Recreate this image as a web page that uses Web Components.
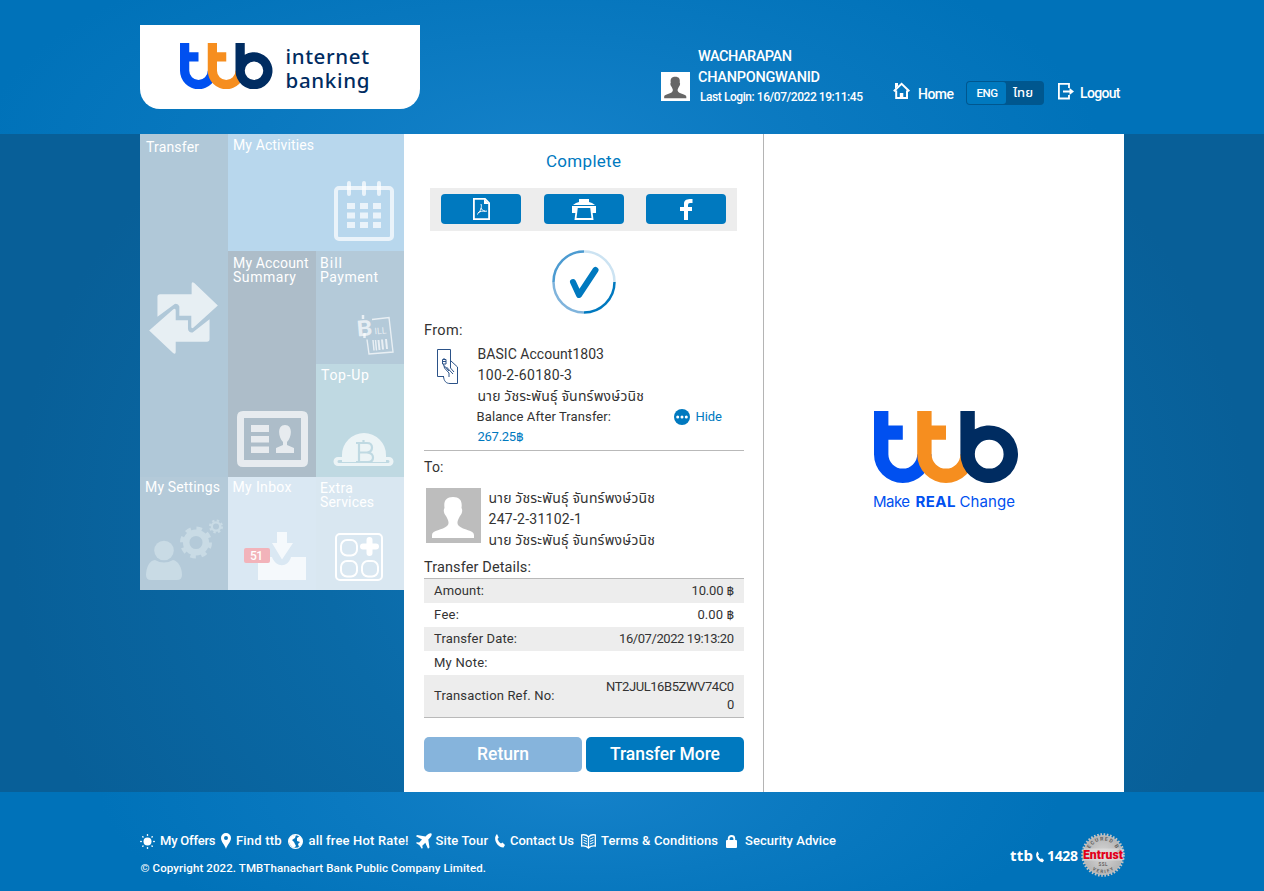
<!DOCTYPE html>
<html lang="en">
<head>
<meta charset="utf-8">
<title>ttb internet banking</title>
<style>
html,body{margin:0;height:100%}
body{font-family:Roboto,"Noto Sans Thai","Noto Sans",sans-serif;color:#333;overflow:hidden}
</style>
</head>
<body>
<bank-app></bank-app>
<script>
const make = (name, html, after) => customElements.define(name, class extends HTMLElement {
  constructor() {
    super();
    this.attachShadow({mode: 'open'}).innerHTML = html;
  }
  connectedCallback() { if (after) after(this); }
});

// Logo mark, drawn on a 10 x 5 unit grid
make('ttb-mark', `<style>:host{display:block}svg{display:block;width:100%;height:auto}</style>
<svg viewBox="0 0 10 5"><path fill="#0050f0" d="M0 0H1V1H2V2H1V3A1 1 0 0 0 3 3H4A2 2 0 0 1 0 3Z"/>
<path fill="#f68e1f" d="M3 0H4V1H5V2H4V3A1 1 0 0 0 6 3H7A2 2 0 0 1 3 3Z"/>
<path fill="#002c61" fill-rule="evenodd" d="M6 0H7V1.27A2 2 0 1 1 6 3ZM8 2A1 1 0 1 0 8 4A1 1 0 1 0 8 2Z"/></svg>`);

make('user-silhouette', `<style>:host{display:block}svg{display:block;width:100%;height:100%}</style>
<svg viewBox="0 0 55 55"><path fill="currentColor" d="M6 50V47C6 42 17 42 21 38C24 35 22 32 20 28C18 26 17 22 18.500 20C17.500 13 20 9 27 9S36.500 13 35.500 20C37 22 36 26 34 28C32 32 30 35 33 38C37 42 48 42 48 47V50Z"/></svg>`);

make('site-header', `<style>
:host{display:flex;height:134px;box-sizing:border-box;padding:25px 140px 0;color:#fff;background:radial-gradient(ellipse 560px 230px at 540px 150px,#1481c9 0,#0a79c0 50%,#0072b9 100%)}
.logo{width:280px;height:84px;background:#fff;border-radius:0 0 20px 20px;display:flex;box-sizing:border-box;padding:18px 0 0 40px;color:#002c61}
ttb-mark{width:92.500px}.words{margin:2px 0 0 13px}
.user{margin-left:241px;padding-top:21px;display:flex;width:232px}
.pic{margin-top:26px;width:29px;height:29px;background:#fff;color:#666;overflow:hidden;flex:none}
.names{margin-left:8px}
.nav{display:flex;align-items:flex-start;padding-top:56px}
.nav svg{display:block}
.toggle{display:flex;box-sizing:border-box;width:78px;height:24px;padding:1px;background:#00578f;border-radius:4px;margin-left:12px}
.on{width:39px;background:#0079bf;border-radius:3px}
</style>
<div class="logo"><ttb-mark></ttb-mark><div class="words"><ui-text w="83.500" size="20.500" lh="23" face="Noto Sans" weight="500">internet</ui-text><ui-text w="84" size="20.500" lh="24" face="Noto Sans" weight="500">banking</ui-text></div></div>
<div class="user"><div class="pic"><user-silhouette></user-silhouette></div>
<div class="names"><ui-text w="94" size="14.500" lh="21" weight="500">WACHARAPAN</ui-text><ui-text w="122" size="14.500" lh="21" weight="500">CHANPONGWANID</ui-text><ui-text w="163" size="12" lh="19" weight="500" style="margin-left:2px">Last Login: 16/07/2022 19:11:45</ui-text></div></div>
<div class="nav">
<svg width="17" height="17" viewBox="0 0 17 17" style="margin-top:1px"><path fill="none" stroke="#fff" stroke-width="2" d="M3.200 8.500V16H14V8.500M.8 9.200L8.600 1.800L16.300 9.200"/><path fill="#fff" d="M2 1H5V4L2 7ZM6.800 11H10.300V16H6.800Z"/></svg>
<ui-text w="36" size="14" lh="20" weight="500" style="margin:3px 0 0 8px">Home</ui-text>
<div class="toggle"><div class="on"><ui-text w="21.500" size="11.500" lh="22" weight="500" style="margin-left:9.500px">ENG</ui-text></div><ui-text w="20" size="13" lh="21" weight="500" style="margin-left:7px">ไทย</ui-text></div>
<svg width="16" height="17" viewBox="0 0 16 17" style="margin:2px 0 0 14px"><path fill="none" stroke="#fff" stroke-width="1.800" d="M11 5V.9H.9V15.500H11V12M5 8.500H13"/><path fill="#fff" d="M11.500 5L16 8.500L11.500 12Z"/></svg>
<ui-text w="40.500" size="14" lh="20" weight="500" style="margin:2px 0 0 6px">Logout</ui-text>
</div>`);

make('menu-tile', `<style>:host{display:flex;flex-direction:column;justify-content:space-between;box-sizing:border-box;color:#fff;overflow:hidden}::slotted(svg){display:block;align-self:flex-end;flex:none}</style>
<div><slot name="label"></slot></div><slot></slot>`);

make('side-menu', `<style>
:host{display:grid;grid-template:117px 113px 113px 113px / 88px 88px 88px;width:264px;height:456px;flex:none}
</style>
<menu-tile style="grid-area:1/1/4/2;background:#b0c8d8;padding:3px 10px 123px 6px"><ui-text slot="label" w="53" size="14" lh="20">Transfer</ui-text>
<svg width="69" height="72" viewBox="33 450 207 217" fill="#fff" fill-opacity=".7"><path d="M58 555V495q0-8 8-8H161V456q0-8 8-3L240 521L166 588q-6 4-6-3V552H124V524q-3-10-14-8Z"/><path d="M33 596L106 532q7-4 7 4V565H150V592q2 12 14 10L215 562V622q0 8-8 8H113V660q0 10-8 4Z"/></svg></menu-tile>
<menu-tile style="grid-area:1/2/2/4;background:#b8d7ed;padding:1px 10px 10px 5px"><ui-text slot="label" w="81" size="14" lh="20">My Activities</ui-text>
<svg width="60" height="60" viewBox="0 0 60 60" fill="none" stroke="#fff" stroke-opacity=".7"><rect x="2" y="7" width="56" height="51" rx="3" stroke-width="4"/><path stroke-width="4" stroke-linecap="round" d="M15 2V13M30 2V13M45 2V13"/><path stroke-width="6" stroke-dasharray="8 5" d="M13 25H47M13 34.500H47M13 44H47"/></svg></menu-tile>
<menu-tile style="grid-area:2/2/4/3;background:#adbdc9;padding:5px 8px 10px 5px"><div slot="label"><ui-text w="75.500" size="14" lh="14">My Account</ui-text><ui-text w="63" size="14" lh="14">Summary</ui-text></div>
<svg width="71" height="56" viewBox="0 0 71 56" fill="#fff" fill-opacity=".7"><path fill-rule="evenodd" d="M6 0H65Q71 0 71 6V50Q71 56 65 56H6Q0 56 0 50V6Q0 0 6 0ZM7 7V49H64V7ZM14 14H32V21H14ZM14 25H32V31.500H14ZM14 35.500H32V42H14ZM39 42V37L46 34V31C41 26 40 14 48 14S55 26 50 31V34L57 37V42Z"/></svg></menu-tile>
<menu-tile style="grid-area:2/3/3/4;background:#b4cad9;padding:5px 10px 9.500px 4px"><div slot="label"><ui-text w="22" size="14" lh="14">Bill</ui-text><ui-text w="58" size="14" lh="14">Payment</ui-text></div>
<svg width="37" height="40" viewBox="0 0 37 40" overflow="visible"><g fill="none" stroke="#fff" stroke-opacity=".7"><path stroke-width="1.400" d="M15 4.500L32 2.500L36 37L12 39L10 24.500"/><path stroke-width="1.500" d="M16 25l1 10.500M18.500 25l1 10.500"/><path stroke-width="2" d="M21.500 25l1 10M25 24.500l1 10M29 24l1 10"/><path stroke-width="2.500" d="M6 0v4M7.500 18v5"/></g><g fill="#fff" fill-opacity=".7" font-family="Roboto" transform="rotate(-5 10 10)"><text x="-.5" y="20.500" font-size="22" font-weight="700" textLength="15.500" lengthAdjust="spacingAndGlyphs">B</text><text x="17" y="20" font-size="9" textLength="12">ILL</text></g></svg></menu-tile>
<menu-tile style="grid-area:3/3/4/4;background:#bfd9e2;padding:1px 10px 10px 5px"><ui-text slot="label" w="48" size="14" lh="20">Top-Up</ui-text>
<svg width="61" height="35" viewBox="0 0 61 35"><path fill="#fff" fill-opacity=".7" d="M9 30V23A22 22 0 0 1 53 23V30ZM9 25H5A4.500 4.500 0 0 0 5 34H56A4.500 4.500 0 0 0 56 25H53V28H55A1.500 1.500 0 0 1 55 31H6A1.500 1.500 0 0 1 6 28H9Z"/><g stroke="#bfd9e2" fill="none" stroke-width="2.200"><path d="M23 11H34Q39 11 39 15.500T34 20.500H25M26 11V30M34 20.500Q40 21 40 25.500T35 30H23"/><path d="M30.500 8V11"/></g></svg></menu-tile>
<menu-tile style="grid-area:4/1;background:#b4cad9;padding:0 5px 10px 5px"><ui-text slot="label" w="75" size="14" lh="20">My Settings</ui-text>
<svg width="77" height="61" viewBox="0 0 77 61" fill="#c9dbe5"><circle cx="18" cy="31.500" r="9.800"/><path d="M0 55C1 44 6 41 9 41Q18 46 27 41C32 42 36 48 36 56Q36 61 31 61H5Q0 61 0 56Z"/><g fill="none" stroke="#c9dbe5"><circle cx="50" cy="23.500" r="9.800" stroke-width="6.500"/><circle cx="50" cy="23.500" r="14" stroke-width="4" stroke-dasharray="5.500 5.500"/><circle cx="70" cy="7.500" r="4.200" stroke-width="2.300"/><circle cx="70" cy="7.500" r="6" stroke-width="2" stroke-dasharray="2.360 2.360"/></g></svg></menu-tile>
<menu-tile style="grid-area:4/2;background:#dae8f3;padding:0 10px 10px 4.500px"><ui-text slot="label" w="59" size="14" lh="20">My Inbox</ui-text>
<svg width="62" height="48" viewBox="0 0 62 48"><path fill="#fff" fill-opacity=".72" d="M14 25H28C32 36 44 36 47 25H62V48H14Z"/><path fill="#fff" fill-opacity=".72" d="M33 0H43V11H49L38 27.500L28 11H33Z"/><rect y="16" width="26" height="15" rx="2" fill="#f2b3ba"/><text x="6" y="27.500" font-family="Roboto" font-size="12" textLength="13" fill="#fff" font-weight="500">51</text></svg></menu-tile>
<menu-tile style="grid-area:4/3;background:#d9e7f1;padding:4px 21px 9px 4px"><div slot="label"><ui-text w="33" size="14" lh="14">Extra</ui-text><ui-text w="54" size="14" lh="14">Services</ui-text></div>
<svg width="48" height="48" viewBox="0 0 48 48" fill="none" stroke="#fff"><rect x="1" y="1" width="46" height="46" rx="4" stroke-width="2"/><g stroke-width="2"><rect x="6" y="7" width="16" height="15.500" rx="6"/><rect x="6" y="28" width="16" height="15.500" rx="6"/><rect x="27" y="28" width="16" height="15.500" rx="6"/></g><path stroke-width="6" stroke-linecap="round" d="M34.500 7V20M28 13.500H41"/></svg></menu-tile>`);

make('action-button', `<style>:host{display:flex;align-items:center;justify-content:center;width:80px;height:30px;border-radius:4px;background:#0079bf;color:#fff}</style><slot></slot>`);

make('detail-row', `<style>:host{display:flex;align-items:center;justify-content:space-between;height:24px;padding:0 10px}:host([alt]){background:#ededed}:host([tall]){height:42px}</style><slot></slot>`);

make('transfer-receipt', `<style>
:host{display:block;box-sizing:border-box;width:360px;height:658px;flex:none;background:#fff;border-right:1px solid #b4b4b4;padding:17px 19px 0 20px;color:#333}
.c{margin-left:122px;color:#0079bf}
.bar{display:flex;background:#ededed;height:43px;width:307px;box-sizing:border-box;margin:17px 0 0 6px;padding:6px 11px;justify-content:space-between}
.check{display:block;margin:19px 0 0 128px}
.row{display:flex}.blue{color:#0079bf}
.from{height:106px;border-bottom:1px solid #b9b9b9;margin-top:3px}
.from>svg{margin:4px 0 0 12px;flex:none}.acct{margin-left:19.500px}
.bal{width:197px;flex:none}
.pic{width:55px;height:55px;background:#bdbdbd;color:#fff;margin:11px 0 0 2px;flex:none}
.table{border:solid #b9b9b9;border-width:1px 0}
.buttons{display:flex;gap:4px;margin-top:19px}.buttons action-button{width:158px;height:35px;border-radius:5px}
</style>
<ui-text class="c" w="75" size="17" lh="20">Complete</ui-text>
<div class="bar">
<action-button><svg width="17" height="22" viewBox="0 0 17 22"><path fill="none" stroke="#fff" stroke-width="1.800" d="M.9.900H12L16.100 5V21.100H.9Z"/><path fill="#fff" d="M11 1V6H16Z"/><path fill="none" stroke="#fff" d="M8 6C9 9 8 13 4 16.500M8 10C9 12 11 14 14 13M5 15C7 13 10 13 12 13"/></svg></action-button>
<action-button><svg width="24" height="22" viewBox="0 0 24 22"><path fill="#fff" d="M7 1H17V4L20 5L23 7H1L4 5L7 4ZM0 8H24V15H20L19 10H5L4 15H0Z"/><path fill="none" stroke="#fff" stroke-width="1.800" d="M5 9L3.500 21H20.500L19 9"/></svg></action-button>
<action-button><svg width="13" height="21" viewBox="0 0 13 21"><path fill="#fff" d="M4 21V12H0V8H4V5C4 1 7-.3 12.500 0V4H10Q8 4 8 6V8H12V12H8V21Z"/></svg></action-button>
</div>
<svg class="check" width="64" height="64" viewBox="0 0 64 64" fill="none" stroke-width="2.500"><path stroke="#cce3f2" d="M32 1.500A30.500 30.500 0 0 1 62.500 32"/><path stroke="#0079bf" d="M62.500 32A30.500 30.500 0 0 1 32 62.500"/><path stroke="#80b4dc" d="M32 62.500A30.500 30.500 0 0 1 1.500 32"/><path stroke="#4c9bd1" d="M1.500 32A30.500 30.500 0 0 1 32 1.500"/><path stroke="#0079bf" stroke-width="6" stroke-linecap="round" stroke-linejoin="round" d="M21 32L27 45L43.500 20"/></svg>
<ui-text w="38.500" size="14.500" lh="20" style="margin-top:7px">From:</ui-text>
<div class="row from"><svg width="22" height="36" viewBox="0 0 22 36" fill="none" stroke="#2b5288"><path d="M14.500 13V1.500H1.500V28.500H8M7.500 28.500C8 33 10 35.500 14 35.500H21.500V19L14.500 12.500M14.500 13V20L18 24M10.500 19L17 26M8 17.500L13 23M7.500 16L8.500 20L13 25V29"/><path d="M6.500 11.500H10V16H6.500ZM6.500 13.500H10M8 10V11.500"/></svg>
<div class="acct"><ui-text w="126.500" size="14" lh="21">BASIC Account1803</ui-text><ui-text w="94.500" size="14" lh="21">100-2-60180-3</ui-text><ui-text w="166.500" size="14" lh="21">นาย วัชระพันธุ์ จันทร์พงษ์วนิช</ui-text>
<div class="row"><ui-text class="bal" w="134.500" size="13" lh="20" style="margin-left:-1px">Balance After Transfer:</ui-text><svg width="16" height="16" viewBox="0 0 16 16" style="margin-top:2px;flex:none"><circle cx="8" cy="8" r="8" fill="#0079bf"/><path stroke="#fff" stroke-width="3" stroke-linecap="round" d="M3.700 8h0M8 8h0M12.300 8h0"/></svg><ui-text class="blue" w="26.500" size="13" lh="20" style="margin-left:6px">Hide</ui-text></div>
<ui-text class="blue" w="46" size="13" lh="20">267.25฿</ui-text></div></div>
<ui-text w="19.500" size="14" lh="20" style="margin-top:6px">To:</ui-text>
<div class="row"><div class="pic"><user-silhouette></user-silhouette></div><div style="margin:11px 0 0 7.500px"><ui-text w="166.500" size="14" lh="21">นาย วัชระพันธุ์ จันทร์พงษ์วนิช</ui-text><ui-text w="93.500" size="14" lh="21">247-2-31102-1</ui-text><ui-text w="166.500" size="14" lh="21">นาย วัชระพันธุ์ จันทร์พงษ์วนิช</ui-text></div></div>
<ui-text w="107" size="14.500" lh="20" style="margin:7px 0 0">Transfer Details:</ui-text>
<div class="table">
<detail-row alt><ui-text w="50" size="13" lh="18">Amount:</ui-text><ui-text w="42.500" size="13" lh="18">10.00 ฿</ui-text></detail-row>
<detail-row><ui-text w="25" size="13" lh="18">Fee:</ui-text><ui-text w="36.500" size="13" lh="18">0.00 ฿</ui-text></detail-row>
<detail-row alt><ui-text w="83" size="13" lh="18">Transfer Date:</ui-text><ui-text w="115" size="13" lh="18">16/07/2022 19:13:20</ui-text></detail-row>
<detail-row><ui-text w="53.500" size="13" lh="18">My Note:</ui-text></detail-row>
<detail-row alt tall><ui-text w="120.500" size="13" lh="18">Transaction Ref. No:</ui-text><div><ui-text w="128" size="13" lh="18">NT2JUL16B5ZWV74C0</ui-text><ui-text w="7" size="13" lh="18" style="margin-left:auto">0</ui-text></div></detail-row>
</div>
<div class="buttons"><action-button style="background:#86b4dc"><ui-text w="52" size="17.500" lh="35" weight="500">Return</ui-text></action-button><action-button><ui-text w="110" size="17.500" lh="35" weight="500">Transfer More</ui-text></action-button></div>`);

make('brand-panel', `<style>:host{display:block;box-sizing:border-box;width:360px;height:658px;background:#fff;padding:277px 0 0 110px;color:#0050f0;flex:none}ttb-mark{width:144px}.s{display:flex;margin-top:9px}</style>
<ttb-mark></ttb-mark><div class="s"><ui-text w="37" size="15" lh="20" face="Inter" style="margin-left:-1px">Make</ui-text><ui-text w="40" size="15" lh="20" face="Inter" weight="700" style="margin-left:5.500px">REAL</ui-text><ui-text w="55.500" size="15" lh="20" face="Inter" style="margin-left:4px">Change</ui-text></div>`);

make('foot-link', `<style>:host{display:flex;align-items:center;height:20px}::slotted(svg){display:block;flex:none}</style><slot></slot>`);

make('site-footer', `<style>
:host{display:flex;height:99px;box-sizing:border-box;padding:39px 139px 0 140px;color:#fff;background:radial-gradient(ellipse 480px 170px at 580px 0,#1481c9 0,#0a79c0 50%,#0072b9 100%)}
.left{width:870px;flex:none}.links{display:flex}.links ui-text{flex:none}
.right{display:flex;padding-top:2px}
</style>
<div class="left"><div class="links">
<foot-link><svg width="15" height="15" viewBox="0 0 15 15"><circle cx="7.500" cy="7.500" r="4" fill="#fff"/><path stroke="#fff" stroke-width="1.500" stroke-linecap="round" d="M7.500.8v.4M7.500 13.800v.4M.8 7.500h.4M13.800 7.500h.4M2.800 2.800l.2.200M12 12l.2.200M2.800 12.200l.2-.2M12 3l.2-.2"/></svg><ui-text w="55.500" size="13" lh="20" weight="500" style="margin-left:5px">My Offers</ui-text></foot-link>
<foot-link style="margin-left:5px"><svg width="10" height="16" viewBox="0 0 10 16"><path fill="#fff" fill-rule="evenodd" d="M5 0A5 5 0 0 0 0 5C0 9 4 12 5 16C6 12 10 9 10 5A5 5 0 0 0 5 0ZM5 3A2 2 0 1 1 5 7A2 2 0 1 1 5 3Z"/></svg><ui-text w="45.500" size="13" lh="20" weight="500" style="margin-left:5.500px">Find ttb</ui-text></foot-link>
<foot-link style="margin-left:6.500px"><svg width="15" height="15" viewBox="0 0 15 15"><circle cx="7.500" cy="7.500" r="6.900" fill="none" stroke="#fff" stroke-width="1.200"/><path fill="#fff" d="M1 5Q3 1 8 1L7 4L4 6L6 8L8 12L6 14Q2 12 1 8ZM9 4L12 2Q15 5 14 10L11 13L10 10L12 8L9 7Z"/></svg><ui-text w="100" size="13" lh="20" weight="500" style="margin-left:5.500px">all free Hot Rate!</ui-text></foot-link>
<foot-link style="margin-left:7.500px"><svg width="16" height="16" viewBox="0 0 16 16"><path fill="#fff" d="M15.500.5Q13.500-.3 11 2L9.500 3.500L1 2L0 3.200L6 6.500L3.200 9.500L.8 9.200L0 10L3.500 12.300L5.800 15.800L6.700 15L6.300 12.700L9.300 9.800L12 15.800L13.500 14.500L12.300 6.500L14 4.800Q16.300 2.500 15.500.5Z"/></svg><ui-text w="52.500" size="13" lh="20" weight="500" style="margin-left:3.500px">Site Tour</ui-text></foot-link>
<foot-link style="margin-left:7px"><svg width="10" height="14" viewBox="0 0 10 14"><path fill="#fff" d="M2 0L3.700 3.500L2.500 5Q3.500 8 6 9.500L7.500 8.500L10 11L8.500 13.500C3 14-3 5 2 0Z"/></svg><ui-text w="64" size="13" lh="20" weight="500" style="margin-left:5px">Contact Us</ui-text></foot-link>
<foot-link style="margin-left:7px"><svg width="15" height="15" viewBox="0 0 15 15" fill="none" stroke="#fff"><path stroke-width="1.300" d="M.7 1Q5 0 7.500 3Q10 0 14.300 1V12Q10 11.500 7.500 14Q5 11.500.7 12ZM7.500 3V14"/><path d="M2.500 3.500L6 5M2.500 6L6 7.500M2.500 8.500L6 10M12.500 3.500L9 5M12.500 6L9 7.500M12.500 8.500L9 10"/></svg><ui-text w="117" size="13" lh="20" weight="500" style="margin-left:5px">Terms &amp; Conditions</ui-text></foot-link>
<foot-link style="margin-left:7.500px"><svg width="11" height="13" viewBox="0 0 11 13"><rect y="5" width="11" height="8" rx="1" fill="#fff"/><path fill="none" stroke="#fff" stroke-width="1.800" d="M2.700 6V3.500Q2.700 1 5.500 1T8.300 3.500V6"/></svg><ui-text w="91" size="13" lh="20" weight="500" style="margin-left:8.500px">Security Advice</ui-text></foot-link>
</div><ui-text w="345.500" size="11.500" lh="20" weight="500" style="margin:7px 0 0 .5px">© Copyright 2022. TMBThanachart Bank Public Company Limited.</ui-text></div>
<div class="right"><ui-text w="23" size="15" lh="20" face="Noto Sans" weight="700" style="margin-top:12px">ttb</ui-text><svg width="8" height="12" viewBox="0 0 10 14" style="margin:18px 4px 0 3px"><path fill="#fff" d="M2 0L3.700 3.500L2.500 5Q3.500 8 6 9.500L7.500 8.500L10 11L8.500 13.500C3 14-3 5 2 0Z"/></svg><ui-text w="31" size="14" lh="20" face="Noto Sans" weight="700" style="margin:13px 0 0 -1px">1428</ui-text>
<svg width="44" height="46" viewBox="-22 -23 44 46" style="margin:-1px 0 0 3px;flex:none"><defs><radialGradient id="m"><stop offset="0" stop-color="#d8d8d8"/><stop offset="1" stop-color="#b4b4b4"/></radialGradient><path id="up" d="M-14.500 0A14.500 14.500 0 0 1 14.500 0"/><path id="dn" d="M-18 0A18 18 0 0 0 18 0"/></defs><circle r="20" fill="url(#m)"/><circle r="20.500" fill="none" stroke="#c3c3c3" stroke-width="2.600" stroke-dasharray="1.610 1.610"/><g font-family="Roboto" font-weight="700" fill="#5e5e5e" font-size="5.200"><text><textPath href="#up" startOffset="2" textLength="41">SECURED BY</textPath></text><text font-size="4.500"><textPath href="#dn" startOffset="16.500" textLength="23">VERIFY</textPath></text><text x="-4.500" y="10.800" font-size="4.500" textLength="9" fill="#666">SSL</text></g><rect x="-20.500" y="-6.500" width="41" height="12" fill="#e3e3e3" fill-opacity=".6"/><text x="-20" y="3.700" font-family="Roboto" font-weight="900" font-size="12" fill="#e2001a" textLength="40" lengthAdjust="spacingAndGlyphs">Entrust</text></svg></div>`);

make('bank-app', `<style>
:host{display:block;width:1264px;height:891px;overflow:hidden}
main{display:flex;height:658px;padding:0 140px;background:radial-gradient(ellipse 620px 560px at 632px 400px,#1078bd 0,#0a6aa7 50%,#085f98 100%)}
</style><site-header></site-header><main><side-menu></side-menu><transfer-receipt></transfer-receipt><brand-panel></brand-panel></main><site-footer></site-footer>`);

// A single line of text whose tracking is adjusted to fill a given width
make('ui-text', `<style>:host{display:block;white-space:nowrap}span{display:inline-block;vertical-align:top}</style><span><slot></slot></span>`, el => {
  const get = n => el.getAttribute(n), s = el.style, w = parseFloat(get('w'));
  s.fontSize = get('size') + 'px';
  s.lineHeight = s.height = get('lh') + 'px';
  if (get('weight')) s.fontWeight = get('weight');
  if (get('face')) s.fontFamily = '"' + get('face') + '", sans-serif';
  const segs = [...new Intl.Segmenter('th', {granularity: 'grapheme'}).segment(el.textContent)].length;
  const natural = el.shadowRoot.querySelector('span').getBoundingClientRect().width;
  if (segs > 1) s.letterSpacing = ((w - natural) / (segs - 1)).toFixed(3) + 'px';
  if (!el.classList.contains('bal')) s.width = w + 'px';
});
</script>
</body>
</html>
